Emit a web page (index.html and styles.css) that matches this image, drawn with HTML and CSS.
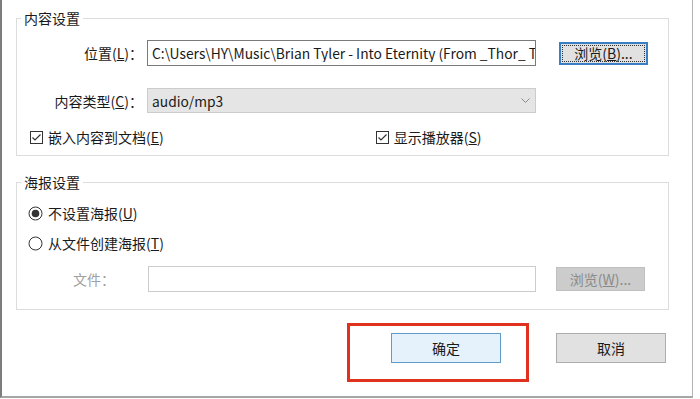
FILE: index.html
```html
<!DOCTYPE html>
<html lang="zh-CN">
<head>
<meta charset="utf-8">
<title>对象属性</title>
<link rel="stylesheet" href="styles.css">
</head>
<body>
<div class="window">
  <fieldset class="group g1">
    <legend>内容设置</legend>
    <div class="row r1">
      <span class="lbl">位置(<u>L</u>)：</span>
      <div class="field"><span class="val">C:\Users\HY\Music\Brian Tyler - Into Eternity (From _Thor_ T</span></div>
      <button class="btn browse">浏览(<u>B</u>)...</button>
    </div>
    <div class="row r2">
      <span class="lbl">内容类型(<u>C</u>)：</span>
      <div class="select">
        <span class="val">audio/mp3</span>
        <svg class="chev" width="9" height="6" viewBox="0 0 9 6"><polyline points="0.5,0.5 4.5,4.5 8.5,0.5" fill="none" stroke="#8a8a8a" stroke-width="1"/></svg>
      </div>
    </div>
    <div class="row r3">
      <span class="check c1">
        <svg width="13" height="13" viewBox="0 0 13 13"><rect x="0.5" y="0.5" width="12" height="12" fill="#fff" stroke="#333"/><polyline points="2.5,6.5 5,9 10.5,3.5" fill="none" stroke="#333" stroke-width="1.2"/></svg>
        <span>嵌入内容到文档(<u>E</u>)</span>
      </span>
      <span class="check c2">
        <svg width="13" height="13" viewBox="0 0 13 13"><rect x="0.5" y="0.5" width="12" height="12" fill="#fff" stroke="#333"/><polyline points="2.5,6.5 5,9 10.5,3.5" fill="none" stroke="#333" stroke-width="1.2"/></svg>
        <span>显示播放器(<u>S</u>)</span>
      </span>
    </div>
  </fieldset>

  <fieldset class="group g2">
    <legend>海报设置</legend>
    <div class="row radio-row first">
      <svg width="15" height="15" viewBox="0 0 15 15"><circle cx="7.5" cy="7.5" r="6.5" fill="#fff" stroke="#333"/><circle cx="7.5" cy="7.5" r="3.8" fill="#333"/></svg>
      <span>不设置海报(<u>U</u>)</span>
    </div>
    <div class="row radio-row second">
      <svg width="15" height="15" viewBox="0 0 15 15"><circle cx="7.5" cy="7.5" r="6.5" fill="#fff" stroke="#333"/></svg>
      <span>从文件创建海报(<u>T</u>)</span>
    </div>
    <div class="row r-file">
      <span class="lbl2">文件：</span>
      <div class="field disabled"></div>
      <button class="btn browse2" disabled>浏览(<u>W</u>)...</button>
    </div>
  </fieldset>

  <div class="footer">
    <div class="mark">
      <button class="btn ok">确定</button>
    </div>
    <button class="btn cancel">取消</button>
  </div>
</div>
</body>
</html>
```

FILE: styles.css
```css
* { box-sizing: border-box; }
html, body { margin: 0; background: #fff; }
body {
  font-family: "Noto Sans CJK SC", "Noto Sans", sans-serif;
  font-size: 14px;
  color: #1a1a1a;
}
u { text-decoration: underline; text-underline-offset: 1px; }

.window {
  width: 693px;
  height: 398px;
  border-left: 2px solid #7d7d7d;
  border-right: 1px solid #b4b4b4;
  border-bottom: 2px solid #a6a6a6;
  padding: 8px 0 0 14px;
}

.group {
  margin: 0;
  width: 653px;
  border: 1px solid #dcdcdc;
  padding: 0;
  min-inline-size: 0;
}
.group legend {
  margin-left: 4px;
  padding: 0 3px;
  line-height: 20px;
  height: 20px;
}
.g1 { padding: 12px 0 9px 0; }
.g2 { margin-top: 16px; padding: 12px 0 17px 0; }

.row { display: flex; align-items: center; }
.r1 { height: 26px; }
.r2 { height: 25px; margin-top: 22px; }
.r3 { height: 18px; margin-top: 15px; }

.lbl {
  width: 126px;
  text-align: right;
  margin-right: 4px;
  line-height: 20px;
  white-space: nowrap;
}

.field {
  width: 389px;
  height: 26px;
  border: 1px solid #7a7a7a;
  background: #fff;
  overflow: hidden;
  white-space: nowrap;
  padding: 3px 0 0 4px;
}
.field .val { display: block; font-size: 13.8px; line-height: 18px; overflow: hidden; }
.field.disabled { border-color: #cccccc; width: 388px; }

.select {
  width: 389px;
  height: 25px;
  border: 1px solid #cccccc;
  background: #e5e5e5;
  display: flex;
  align-items: center;
  justify-content: space-between;
  padding: 0 5px 0 4px;
}
.select .val { font-size: 13.8px; line-height: 18px; }
.chev { display: block; }

.btn {
  font-family: inherit;
  font-size: 14px;
  color: #1a1a1a;
  background: #e1e1e1;
  border: 1px solid #adadad;
  padding: 0;
  line-height: 20px;
  text-align: center;
  white-space: nowrap;
}
.browse {
  width: 89px;
  height: 23px;
  margin-left: 23px;
  border: 2px solid #3a7fc4;
  outline: 1px dotted #333;
  outline-offset: -4px;
  line-height: 18px;
}

.check { display: flex; align-items: center; gap: 5px; line-height: 18px; }
.check svg { display: block; }
.c1 { margin-left: 13px; }
.c2 { margin-left: 212px; }

.radio-row { height: 18px; gap: 5px; padding-left: 11px; line-height: 18px; }
.radio-row svg { display: block; }
.radio-row.second { margin-top: 12px; }

.r-file { height: 26px; margin-top: 14px; }
.lbl2 {
  width: 75px;
  margin-left: 56px;
  color: #a0a0a0;
  line-height: 20px;
}
.browse2 {
  width: 89px;
  height: 24px;
  margin-left: 20px;
  background: #cccccc;
  border-color: #bfbfbf;
  color: #8a8a8a;
}
.browse2 u { text-decoration-color: #8a8a8a; }

.footer {
  display: flex;
  justify-content: flex-end;
  align-items: flex-start;
  margin-top: 13px;
  padding-right: 26px;
}
.mark {
  border: 3px solid #e0301e;
  padding: 7px 25px 16px 41px;
}
.ok {
  width: 110px;
  height: 30px;
  background: #e5f1fb;
  border-color: #5f9ccb;
}
.cancel {
  width: 110px;
  height: 30px;
  margin-top: 10px;
  margin-left: 27px;
}
```
